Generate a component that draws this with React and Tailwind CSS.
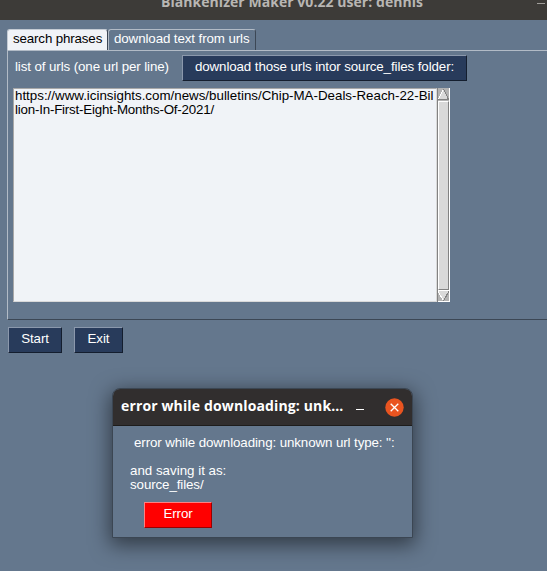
function Button({ children, className }) {
  return (
    <button className={`block shrink-0 whitespace-nowrap border border-t-[#8b98ac] border-l-[#8b98ac] border-r-[#141e2e] border-b-[#141e2e] bg-[#283b5b] pb-[3px] text-center leading-[21px] text-white ${className}`}>
      {children}
    </button>
  );
}

function ScrollBar() {
  return (
    <div className="flex w-[13px] shrink-0 flex-col border-l border-l-[#828282] border-r border-r-white bg-[#b3b3b3]">
      <svg className="block h-[13px] w-[11px]" viewBox="0 0 11 13" shapeRendering="crispEdges">
        <path d="M5.5 1L11 12H0Z" fill="#d9d9d9" />
        <path d="M5.5 1L0 12" stroke="#fff" />
        <path d="M5.5 1L10.5 11.5H0" stroke="#828282" fill="none" />
      </svg>
      <div className="flex-1 border border-t-white border-l-white border-r-[#828282] border-b-[#828282] bg-[#d9d9d9]" />
      <svg className="block h-[12px] w-[11px]" viewBox="0 0 11 12" shapeRendering="crispEdges">
        <path d="M0 1H11L5.5 11Z" fill="#d9d9d9" />
        <path d="M0 .5H11M0 1L5.5 11M0 11.5H11" stroke="#fff" />
        <path d="M5.5 11L11 1" stroke="#828282" />
      </svg>
    </div>
  );
}

function Dialog() {
  return (
    <div className="absolute left-[112px] top-[388px] h-[150px] w-[301px] rounded-t-lg border border-[#3b4653] bg-[#64778d] shadow-[0_5px_20px_2px_rgba(0,0,0,0.5)]">
      <div className="flex h-[37px] items-center rounded-t-[7px] border-b border-b-[#1d1c1b] bg-[#312e2e] pl-2 font-['Open_Sans','Noto_Sans',sans-serif] text-[14px] font-bold tracking-[0.14px] text-white">
        <span className="-mt-[3px] w-[223px] whitespace-nowrap">error while downloading: unk…</span>
        <span className="ml-[12px] mt-[5px] h-px w-2 bg-white" />
        <svg className="ml-[20.5px] h-[19px] w-[19px]" viewBox="0 0 19 19">
          <circle cx="9.5" cy="9.5" r="9.2" fill="#e95420" />
          <path d="M5.7 5.7L13.3 13.3M13.3 5.7L5.7 13.3" stroke="#fff" strokeWidth="1.3" />
        </svg>
      </div>
      <div className="whitespace-pre pl-[17px] pt-[10px] leading-[14px] text-white">
        <p className="pl-1">error while downloading: unknown url type: '':</p>
        <p className="pt-[14px] tracking-[0px]">and saving it as:</p>
        <p>source_files/</p>
      </div>
      <button className="ml-[31px] mt-[10px] block h-[26px] w-[68px] border border-t-[#ff8080] border-l-[#ff8080] border-r-[#990000] border-b-[#990000] bg-[#ff0000] pb-[3px] text-center leading-[21px] text-white">
        Error
      </button>
    </div>
  );
}

export default function App() {
  return (
    <main className="relative h-[571px] w-[547px] overflow-hidden bg-[#64778d] font-['Liberation_Sans',Arial,sans-serif] text-[13.33px] tracking-[-0.1px] text-white">
      <header className="flex h-5 justify-end overflow-hidden bg-[#3d3b38] font-['Open_Sans','Noto_Sans',sans-serif] text-[14px] font-bold leading-[20px] tracking-[0.05px] text-[#b8b6b3]">
        <span className="-mt-[8px] mr-[112px] w-[264px] whitespace-nowrap">Blankenizer Maker v0.22 user: dennis</span>
        <span className="mr-[2px] mt-[3px] h-px w-[8px] shrink-0 bg-[#a09e9a]" />
      </header>
      <nav className="flex h-[30px] pl-[7px] pt-[9px] leading-[18px]">
        <div className="h-[21px] w-[101px] whitespace-nowrap rounded-t-[3px] border-t border-l border-t-[#c4cbd4] border-l-[#c4cbd4] border-r border-r-[#3c4755] bg-[#f0f3f7] pl-[5px] tracking-[-0.14px] text-black">search phrases</div>
        <div className="h-[21px] w-[148px] whitespace-nowrap rounded-t-[3px] border-t border-l border-t-[#b2bbc6] border-l-[#b2bbc6] border-r border-r-[#3c4755] pl-[5px]">download text from urls</div>
      </nav>
      <section className="ml-[7px] h-[270px] border-t border-l border-t-[#b2bbc6] border-l-[#b2bbc6] border-b border-b-[#3c4755]">
        <div className="flex pl-[7px] pt-1">
          <span className="w-[167px] whitespace-nowrap leading-[23px]">list of urls (one url per line)</span>
          <Button className="h-[26px] w-[285px]">download those urls intor source_files folder:</Button>
        </div>
        <div className="ml-[5px] mt-[7px] flex h-[214px] w-[437px]">
          <div className="flex-1 whitespace-pre border border-t-[#a8a8a8] border-l-[#a8a8a8] border-r-[#d9d9d9] border-b-[#d9d9d9] bg-[#f0f3f7] pl-px leading-[14px] text-black">
            <p className="tracking-[0px]">https://www.icinsights.com/news/bulletins/Chip-MA-Deals-Reach-22-Bil</p>
            <p className="tracking-[-0.2px]">lion-In-First-Eight-Months-Of-2021/</p>
          </div>
          <ScrollBar />
        </div>
      </section>
      <div className="flex gap-3 pl-2 pt-[7px]">
        <Button className="h-[26px] w-[54px]">Start</Button>
        <Button className="h-[26px] w-[49px]">Exit</Button>
      </div>
      <Dialog />
    </main>
  );
}
